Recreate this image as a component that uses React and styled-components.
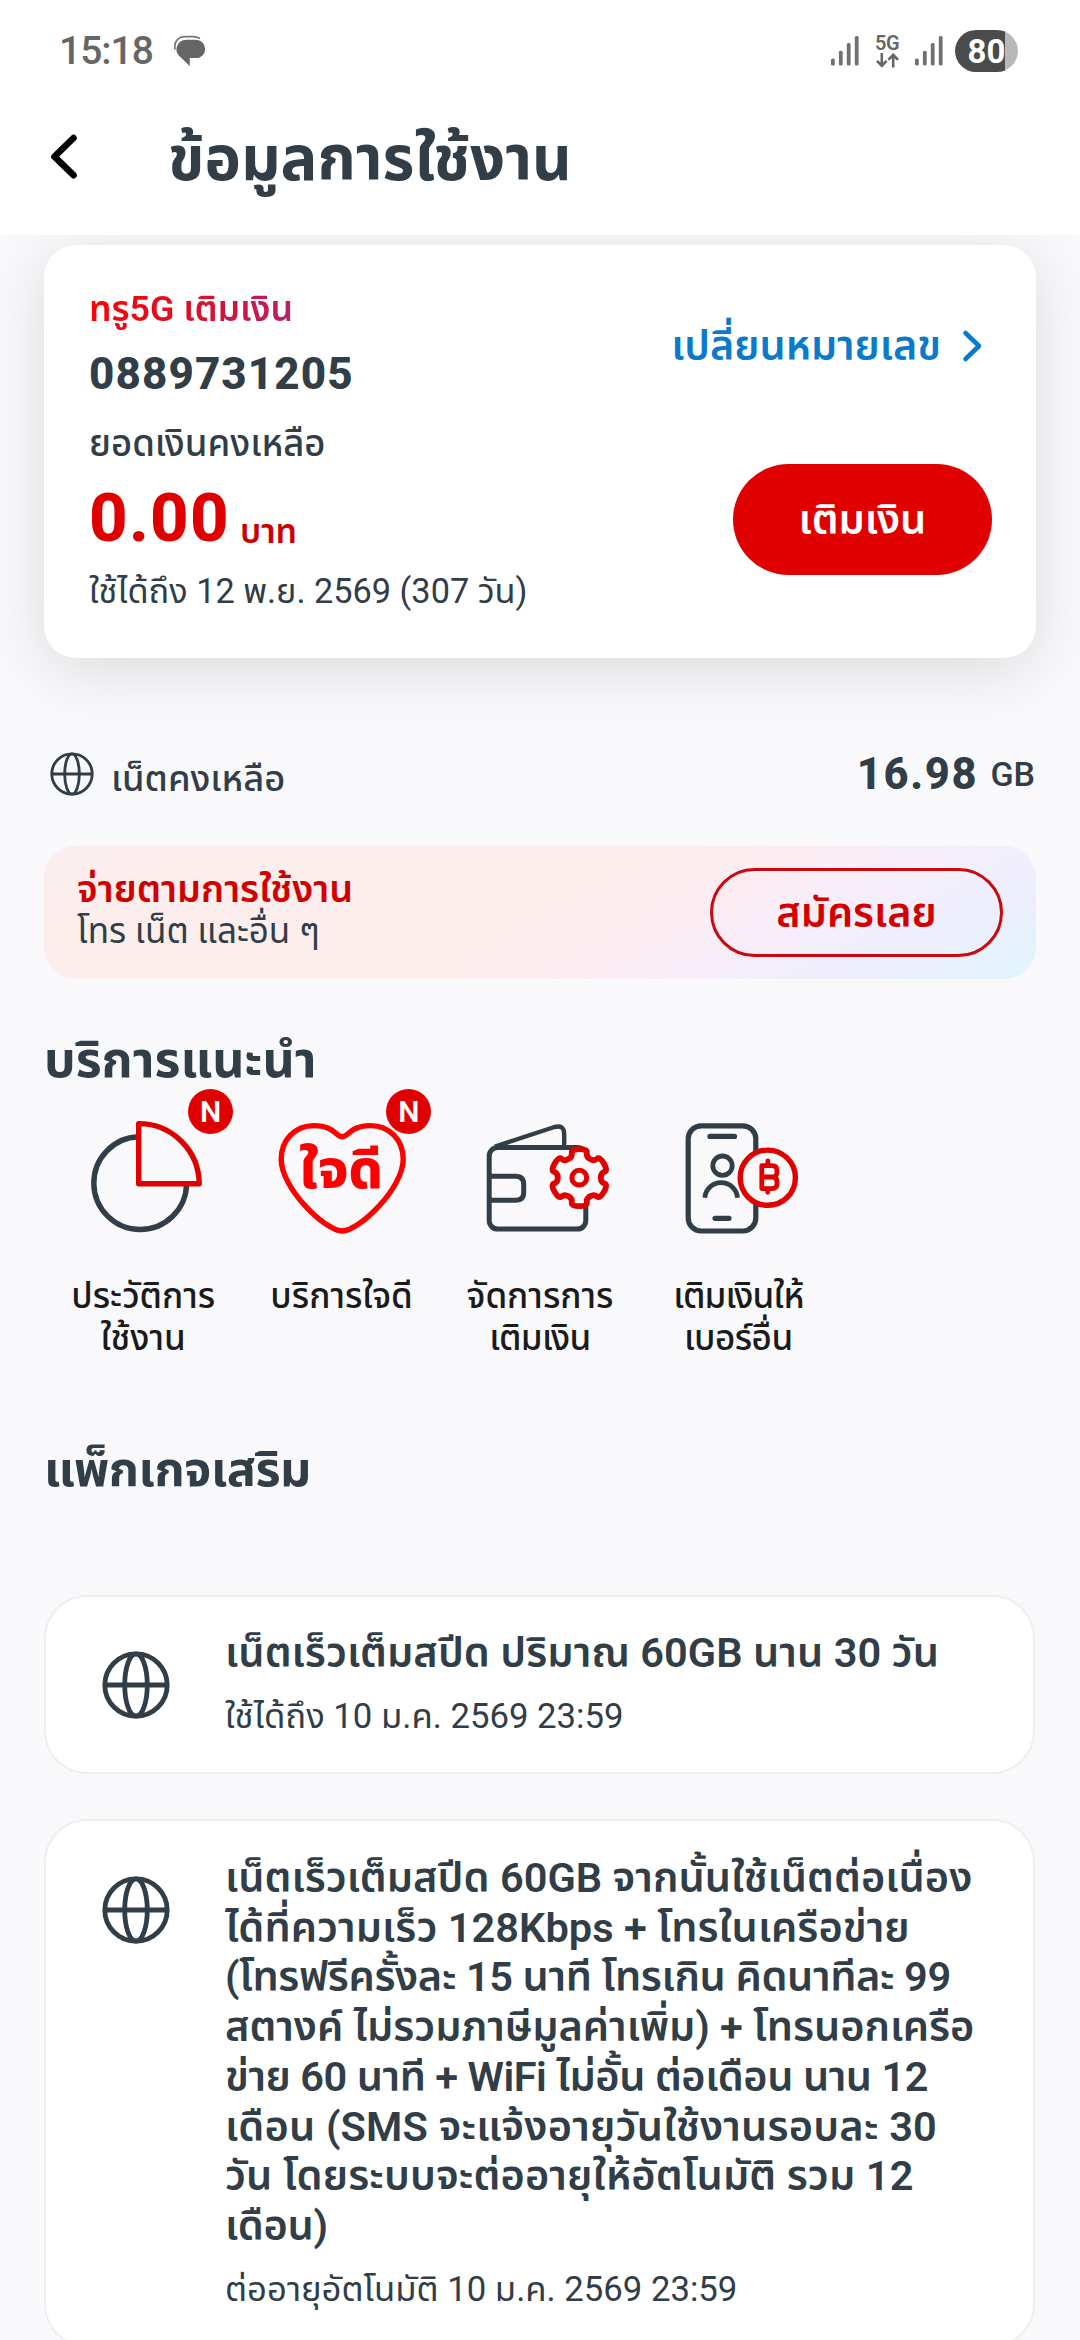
import React from 'react';
import styled, { createGlobalStyle } from 'styled-components';

const INK = '#313d47';
const RED = '#e10000';
const BG = '#f9f9fc';

const GlobalStyle = createGlobalStyle`
  * {
    box-sizing: border-box;
  }
  body {
    margin: 0;
    background: ${BG};
    color: ${INK};
    font-family: Roboto, 'Noto Sans Thai', sans-serif;
  }
`;

const Screen = styled.div`
  width: 1080px;
  height: 2340px;
  overflow: hidden;
  display: flex;
  flex-direction: column;
  background: ${BG};
`;

const Text = styled.span`
  font-size: ${(p) => p.$size}px;
  font-weight: ${(p) => p.$weight || 400};
  line-height: ${(p) => (p.$line ? `${p.$line}px` : 1)};
  letter-spacing: ${(p) => p.$spacing || 0}px;
  color: ${(p) => p.$color || 'inherit'};
  white-space: nowrap;
`;

/* ---------- header ---------- */

const Header = styled.header`
  flex: none;
  height: 235px;
  background: #fff;
  position: relative;
  z-index: 1;
`;

const StatusBar = styled.div`
  height: 102px;
  padding: 0 62px 0 59px;
  display: flex;
  justify-content: space-between;
  align-items: center;
  color: #666;
`;

const StatusGroup = styled.div`
  display: flex;
  align-items: center;
  gap: ${(p) => p.$gap}px;
`;

const Network = styled.div`
  width: 24px;
  display: flex;
  flex-direction: column;
  align-items: center;
  gap: 1px;
`;

const Battery = styled.div`
  width: 63px;
  height: 42px;
  margin-left: -4px;
  border-radius: 21px;
  background: linear-gradient(90deg, #4b4b4b 79%, #b8b8b8 79%);
  color: #fff;
  display: flex;
  justify-content: center;
  align-items: center;
`;

const NavBar = styled.div`
  height: 133px;
  padding: 0 48px 19px;
  display: flex;
  align-items: center;
  gap: 88px;
`;

/* ---------- balance card ---------- */

const Content = styled.main`
  flex: none;
  padding: 10px 44px 0;
  display: flex;
  flex-direction: column;
`;

const BalanceCard = styled.section`
  height: 413px;
  padding: 38px 44px 0 45px;
  display: flex;
  justify-content: space-between;
  background: #fff;
  border-radius: 32px;
  box-shadow: 0 12px 64px rgba(0, 0, 0, 0.12);
`;

const BalanceInfo = styled.div`
  display: flex;
  flex-direction: column;
  align-items: flex-start;
`;

const PlanName = styled(Text)`
  background: linear-gradient(115deg, #ff0000 0%, #dc1028 50%, #c01c5c 88%, #a03080 100%);
  -webkit-background-clip: text;
  background-clip: text;
  color: transparent;
`;

const Amount = styled.div`
  height: ${(p) => p.$height}px;
  font-size: ${(p) => p.$size}px;
  line-height: ${(p) => p.$height}px;
  color: ${(p) => p.$color || 'inherit'};
`;

const Unit = styled(Text)`
  margin-left: ${(p) => p.$gap}px;
  vertical-align: ${(p) => p.$shift}px;
`;

const BalanceActions = styled.div`
  padding-top: 23px;
  display: flex;
  flex-direction: column;
  align-items: flex-end;
`;

const ChangeLink = styled.div`
  height: 80px;
  margin-bottom: 78px;
  padding-right: 9px;
  display: flex;
  align-items: center;
  gap: 20px;
  color: #0b7acb;
`;

const PillButton = styled.button`
  width: ${(p) => p.$width}px;
  height: ${(p) => p.$height}px;
  padding: 0;
  border: ${(p) => (p.$outline ? '3px solid #c9080f' : 'none')};
  border-radius: 56px;
  background: ${(p) => (p.$outline ? 'transparent' : RED)};
  color: ${(p) => (p.$outline ? '#d40000' : '#fff')};
  font-family: inherit;
  display: flex;
  justify-content: center;
  align-items: center;
`;

/* ---------- remaining data + banner ---------- */

const DataRow = styled.div`
  height: 80px;
  margin: 76px 0 32px;
  padding: 0 1px 0 6px;
  display: flex;
  justify-content: space-between;
  align-items: center;
`;

const DataLabel = styled.div`
  display: flex;
  align-items: center;
  gap: 17px;

  span {
    padding-top: 11px;
  }
`;

const Banner = styled.section`
  height: 133px;
  padding: 0 33px;
  display: flex;
  justify-content: space-between;
  align-items: center;
  border-radius: 32px;
  background: linear-gradient(
    152deg,
    #fbeeee 0%,
    #fbeeed 52%,
    #fcecf2 62%,
    #f5eefb 75%,
    #ebeffd 88%,
    #dff5fc 100%
  );
`;

const BannerText = styled.div`
  display: flex;
  flex-direction: column;
  padding-bottom: 4px;
`;

const Heading = styled.h2`
  margin: ${(p) => p.$top}px 0 0;
  font-size: ${(p) => p.$size}px;
  font-weight: 700;
  line-height: 60px;
  letter-spacing: ${(p) => p.$spacing || 0}px;
`;

/* ---------- services ---------- */

const Services = styled.div`
  display: grid;
  grid-template-columns: repeat(5, 198.4px);
`;

const Service = styled.div`
  position: relative;
  display: flex;
  flex-direction: column;
  align-items: center;

  svg {
    width: 198px;
    height: 150px;
    margin-bottom: 36px;
    fill: none;
    stroke-linejoin: round;
  }
`;

const NewBadge = styled.span`
  position: absolute;
  top: -1px;
  left: 144px;
  width: 45px;
  height: 45px;
  border-radius: 50%;
  background: ${RED};
  color: #fff;
  font-size: 30px;
  font-weight: 600;
  line-height: 46px;
  text-align: center;
`;

/* ---------- packages ---------- */

const PackageCard = styled.article`
  width: 991px;
  margin-top: ${(p) => p.$top}px;
  padding: 31.5px 40px 31px 56px;
  display: flex;
  align-items: flex-start;
  gap: 55px;
  background: #fff;
  border: 2px solid #efeff1;
  border-radius: 43px;

  svg {
    flex: none;
    margin-top: 23px;
  }
`;

const PackageText = styled.div`
  display: flex;
  flex-direction: column;

  span:last-child {
    margin-top: 12.5px;
  }
`;

/* ---------- icons ---------- */

const Globe = ({ size, stroke }) => (
  <svg width={size} height={size} viewBox="0 0 68 68" fill="none" stroke={INK} strokeWidth={stroke}>
    <circle cx="34" cy="34" r="31.2" />
    <path d="M3 34h62" />
    <ellipse cx="34" cy="34" rx="11.3" ry="31.2" />
  </svg>
);

const SignalBars = () => (
  <svg width="28" height="30" viewBox="0 0 28 30" fill="#707070">
    <rect x="0" y="22.5" width="3.8" height="7" rx="1.5" />
    <rect x="7.9" y="14.7" width="3.8" height="14.8" rx="1.5" />
    <rect x="15.8" y="7" width="3.8" height="22.5" rx="1.5" />
    <rect x="23.8" y="0" width="3.8" height="29.5" rx="1.5" />
  </svg>
);

const MessageIcon = () => (
  <svg width="32" height="34" viewBox="0 0 32 34">
    <path d="M12 5.7h10a9.2 9.2 0 0 1 0 18.4h-6.2v8L4.8 21.5A9.6 9.6 0 0 1 12 5.7z" fill="#666" />
    <path d="M1 15.5C-.4 8 4 2.6 11 2.6h7.5c3 0 5 .4 7.5 1.9" fill="none" stroke="#777" strokeWidth="1.8" />
  </svg>
);

const DataArrows = () => (
  <svg width="23" height="15" viewBox="0 0 23 15" fill="none" stroke="#666" strokeWidth="2.6">
    <path d="M5.8 0v12.5M1 7.8l4.8 5 4.8-5M17.2 14.5V2M12.4 6.8l4.8-5 4.8 5" />
  </svg>
);

const PieIcon = () => (
  <svg viewBox="0 0 198 150" strokeWidth="5.4">
    <path d="M94.7 46.7A46.4 46.4 0 1 0 142.6 94" stroke={INK} />
    <path d="M94.7 33.6A60.5 60.5 0 0 1 155.2 93.8H94.7Z" stroke={RED} />
  </svg>
);

const HeartIcon = () => (
  <svg viewBox="0 0 198 150">
    <path
      d="M99.2 46.7C93 46.7 91 35.6 71 35.6C52 35.6 38.2 50 38.2 69.5C38.2 98 82 141 99.2 141C116.4 141 160.2 98 160.2 69.5C160.2 50 146.4 35.6 127.4 35.6C107.4 35.6 105.4 46.7 99.2 46.7Z"
      stroke="#fe0000"
      strokeWidth="5.4"
    />
    <text x="98" y="98.3" textAnchor="middle" fontSize="54" fontWeight="800" fill="#fe0000">
      ใจดี
    </text>
  </svg>
);

// closed curve through the midpoints of four control points per tooth
const gearPath = (cx, cy) => {
  const pts = [];
  for (let k = 0; k < 6; k++) {
    [[29.6, -16], [29.6, 16], [22, 18], [22, 42]].forEach(([r, a]) => {
      const rad = ((a + k * 60 - 90) * Math.PI) / 180;
      pts.push([cx + r * Math.cos(rad), cy + r * Math.sin(rad)]);
    });
  }
  const mid = (a, b) => `${((a[0] + b[0]) / 2).toFixed(1)} ${((a[1] + b[1]) / 2).toFixed(1)}`;
  const n = pts.length;
  const curves = pts.map((p, i) => `Q${p[0].toFixed(1)} ${p[1].toFixed(1)} ${mid(p, pts[(i + 1) % n])}`);
  return `M${mid(pts[n - 1], pts[0])}${curves.join('')}Z`;
};

const WalletIcon = () => (
  <svg viewBox="0 0 198 150" stroke={INK} strokeWidth="5">
    <rect x="48.2" y="57.5" width="96.6" height="81.6" rx="8.5" />
    <path d="M54 56.5L113.5 37Q123.2 34.5 123.2 44V57" strokeWidth="4.4" />
    <path d="M49 86.3H74.5Q82.7 86.3 82.7 94.3V102.3Q82.7 110.3 74.5 110.3H49" />
    <path d={gearPath(138.3, 87.7)} fill={BG} stroke={RED} strokeWidth="5.8" />
    <circle cx="138.3" cy="87.7" r="7.4" stroke={RED} />
  </svg>
);

const PhoneIcon = () => (
  <svg viewBox="0 0 198 150" stroke={INK} strokeWidth="5.2">
    <rect x="49.2" y="35.8" width="67.6" height="105.2" rx="13" />
    <path d="M71 46.4H95.5M76 128.3H90" strokeLinecap="round" />
    <circle cx="83.5" cy="75.7" r="9.7" strokeWidth="4.8" />
    <path d="M65.8 107.7A16.4 16.4 0 0 1 98.5 107.7" strokeWidth="4.8" />
    <circle cx="128.8" cy="87.7" r="27.6" fill={BG} stroke={RED} strokeWidth="5.4" />
    <path
      d="M122.8 75.6H133Q138 75.6 138 80.5V82Q138 87 133 87H122.8M133 87Q138 87 138 92V93.6Q138 98.6 133 98.6H122.8V75.6M128.8 71V75M128.8 99V102.3"
      stroke={RED}
      strokeWidth="4.8"
      strokeLinecap="round"
    />
  </svg>
);

/* ---------- data ---------- */

const services = [
  { icon: <PieIcon />, lines: [['ประวัติการ', 0], ['ใช้งาน', 0]], isNew: true },
  { icon: <HeartIcon />, lines: [['บริการใจดี', 0]], isNew: true },
  { icon: <WalletIcon />, lines: [['จัดการการ', 0], ['เติมเงิน', -0.6]] },
  { icon: <PhoneIcon />, lines: [['เติมเงินให้', -0.8], ['เบอร์อื่น', -0.5]] },
];

const packages = [
  {
    top: 94.5,
    title: [['เน็ตเร็วเต็มสปีด ปริมาณ 60GB นาน 30 วัน', 0.06]],
    expiry: 'ใช้ได้ถึง 10 ม.ค. 2569 23:59',
  },
  {
    top: 45.5,
    title: [
      ['เน็ตเร็วเต็มสปีด 60GB จากนั้นใช้เน็ตต่อเนื่อง', 0.03],
      ['ได้ที่ความเร็ว 128Kbps + โทรในเครือข่าย', 0.05],
      ['(โทรฟรีครั้งละ 15 นาที โทรเกิน คิดนาทีละ 99', -0.38],
      ['สตางค์ ไม่รวมภาษีมูลค่าเพิ่ม) + โทรนอกเครือ', -0.06],
      ['ข่าย 60 นาที + WiFi ไม่อั้น ต่อเดือน นาน 12', -0.46],
      ['เดือน (SMS จะแจ้งอายุวันใช้งานรอบละ 30', 0.19],
      ['วัน โดยระบบจะต่ออายุให้อัตโนมัติ รวม 12', 0.12],
      ['เดือน)', -0.3],
    ],
    expiry: 'ต่ออายุอัตโนมัติ 10 ม.ค. 2569 23:59',
  },
];

export default class App extends React.Component {
  renderService({ icon, lines, isNew }) {
    return (
      <Service key={lines[0][0]}>
        {icon}
        {isNew && <NewBadge>N</NewBadge>}
        {lines.map(([line, spacing]) => (
          <Text key={line} $size={35} $weight={500} $line={41.7} $spacing={spacing} $color="#1b1b1b">{line}</Text>
        ))}
      </Service>
    );
  }

  renderPackage({ top, title, expiry }) {
    return (
      <PackageCard key={expiry} $top={top}>
        <Globe size={68} stroke={4.8} />
        <PackageText>
          {title.map(([line, spacing]) => (
            <Text key={line} $size={41.5} $weight={600} $line={49.8} $spacing={spacing}>{line}</Text>
          ))}
          <Text $size={34.7} $line={50}>{expiry}</Text>
        </PackageText>
      </PackageCard>
    );
  }

  render() {
    return (
      <Screen>
        <GlobalStyle />
        <Header>
          <StatusBar>
            <StatusGroup $gap={21}>
              <Text $size={39} $weight={500} $spacing={-1}>15:18</Text>
              <MessageIcon />
            </StatusGroup>
            <StatusGroup $gap={16}>
              <SignalBars />
              <Network>
                <Text $size={20} $weight={600} $line={17} $spacing={-0.5}>5G</Text>
                <DataArrows />
              </Network>
              <SignalBars />
              <Battery>
                <Text $size={33} $weight={700}>80</Text>
              </Battery>
            </StatusGroup>
          </StatusBar>
          <NavBar>
            <svg width="32" height="50" viewBox="0 0 32 50" fill="none" stroke="#000" strokeWidth="6.6" strokeLinecap="round" strokeLinejoin="round">
              <path d="M25.5 4L6.5 22.7L25.5 41.2" />
            </svg>
            <Text $size={61.5} $weight={700} $line={80}>ข้อมูลการใช้งาน</Text>
          </NavBar>
        </Header>

        <Content>
          <BalanceCard>
            <BalanceInfo>
              <PlanName $size={35.7} $weight={600} $line={53}>ทรู5G เติมเงิน</PlanName>
              <Text $size={44} $weight={800} $line={76} $spacing={1.1}>0889731205</Text>
              <Text $size={36.5} $weight={500} $line={64}>ยอดเงินคงเหลือ</Text>
              <Amount $size={67} $height={85} $color={RED}>
                <Text $size={67} $weight={800} $spacing={1.3}>0.00</Text>
                <Unit $size={34} $weight={600} $gap={10} $shift={-2} $color="#cc0000">บาท</Unit>
              </Amount>
              <Text $size={34.3} $line={60}>ใช้ได้ถึง 12 พ.ย. 2569 (307 วัน)</Text>
            </BalanceInfo>
            <BalanceActions>
              <ChangeLink>
                <Text $size={41.3} $weight={600} $line={80}>เปลี่ยนหมายเลข</Text>
                <svg width="22" height="34" viewBox="0 0 22 34" fill="none" stroke="#0b7acb" strokeWidth="4.6" strokeLinecap="round" strokeLinejoin="round">
                  <path d="M4.5 4L18 17L4.5 30" />
                </svg>
              </ChangeLink>
              <PillButton $width={259} $height={111}>
                <Text $size={41.5} $weight={600} $line={60}>เติมเงิน</Text>
              </PillButton>
            </BalanceActions>
          </BalanceCard>

          <DataRow>
            <DataLabel>
              <Globe size={44} stroke={4.4} />
              <Text $size={36.3} $weight={500}>เน็ตคงเหลือ</Text>
            </DataLabel>
            <Amount $size={43.5} $height={81}>
              <Text $size={43.5} $weight={800} $spacing={1.7}>16.98</Text>
              <Unit $size={34} $weight={500} $gap={12} $shift={3}>GB</Unit>
            </Amount>
          </DataRow>

          <Banner>
            <BannerText>
              <Text $size={37.7} $weight={600} $line={42} $color="#d10000">จ่ายตามการใช้งาน</Text>
              <Text $size={35} $line={43}>โทร เน็ต และอื่น ๆ</Text>
            </BannerText>
            <PillButton $outline $width={293} $height={89}>
              <Text $size={41.3} $weight={600} $line={60}>สมัครเลย</Text>
            </PillButton>
          </Banner>

          <Heading $top={51} $size={50}>บริการแนะนำ</Heading>
          <Services>{services.map(this.renderService)}</Services>

          <Heading $top={81} $size={48.5} $spacing={-0.5}>แพ็กเกจเสริม</Heading>
          {packages.map(this.renderPackage)}
        </Content>
      </Screen>
    );
  }
}
